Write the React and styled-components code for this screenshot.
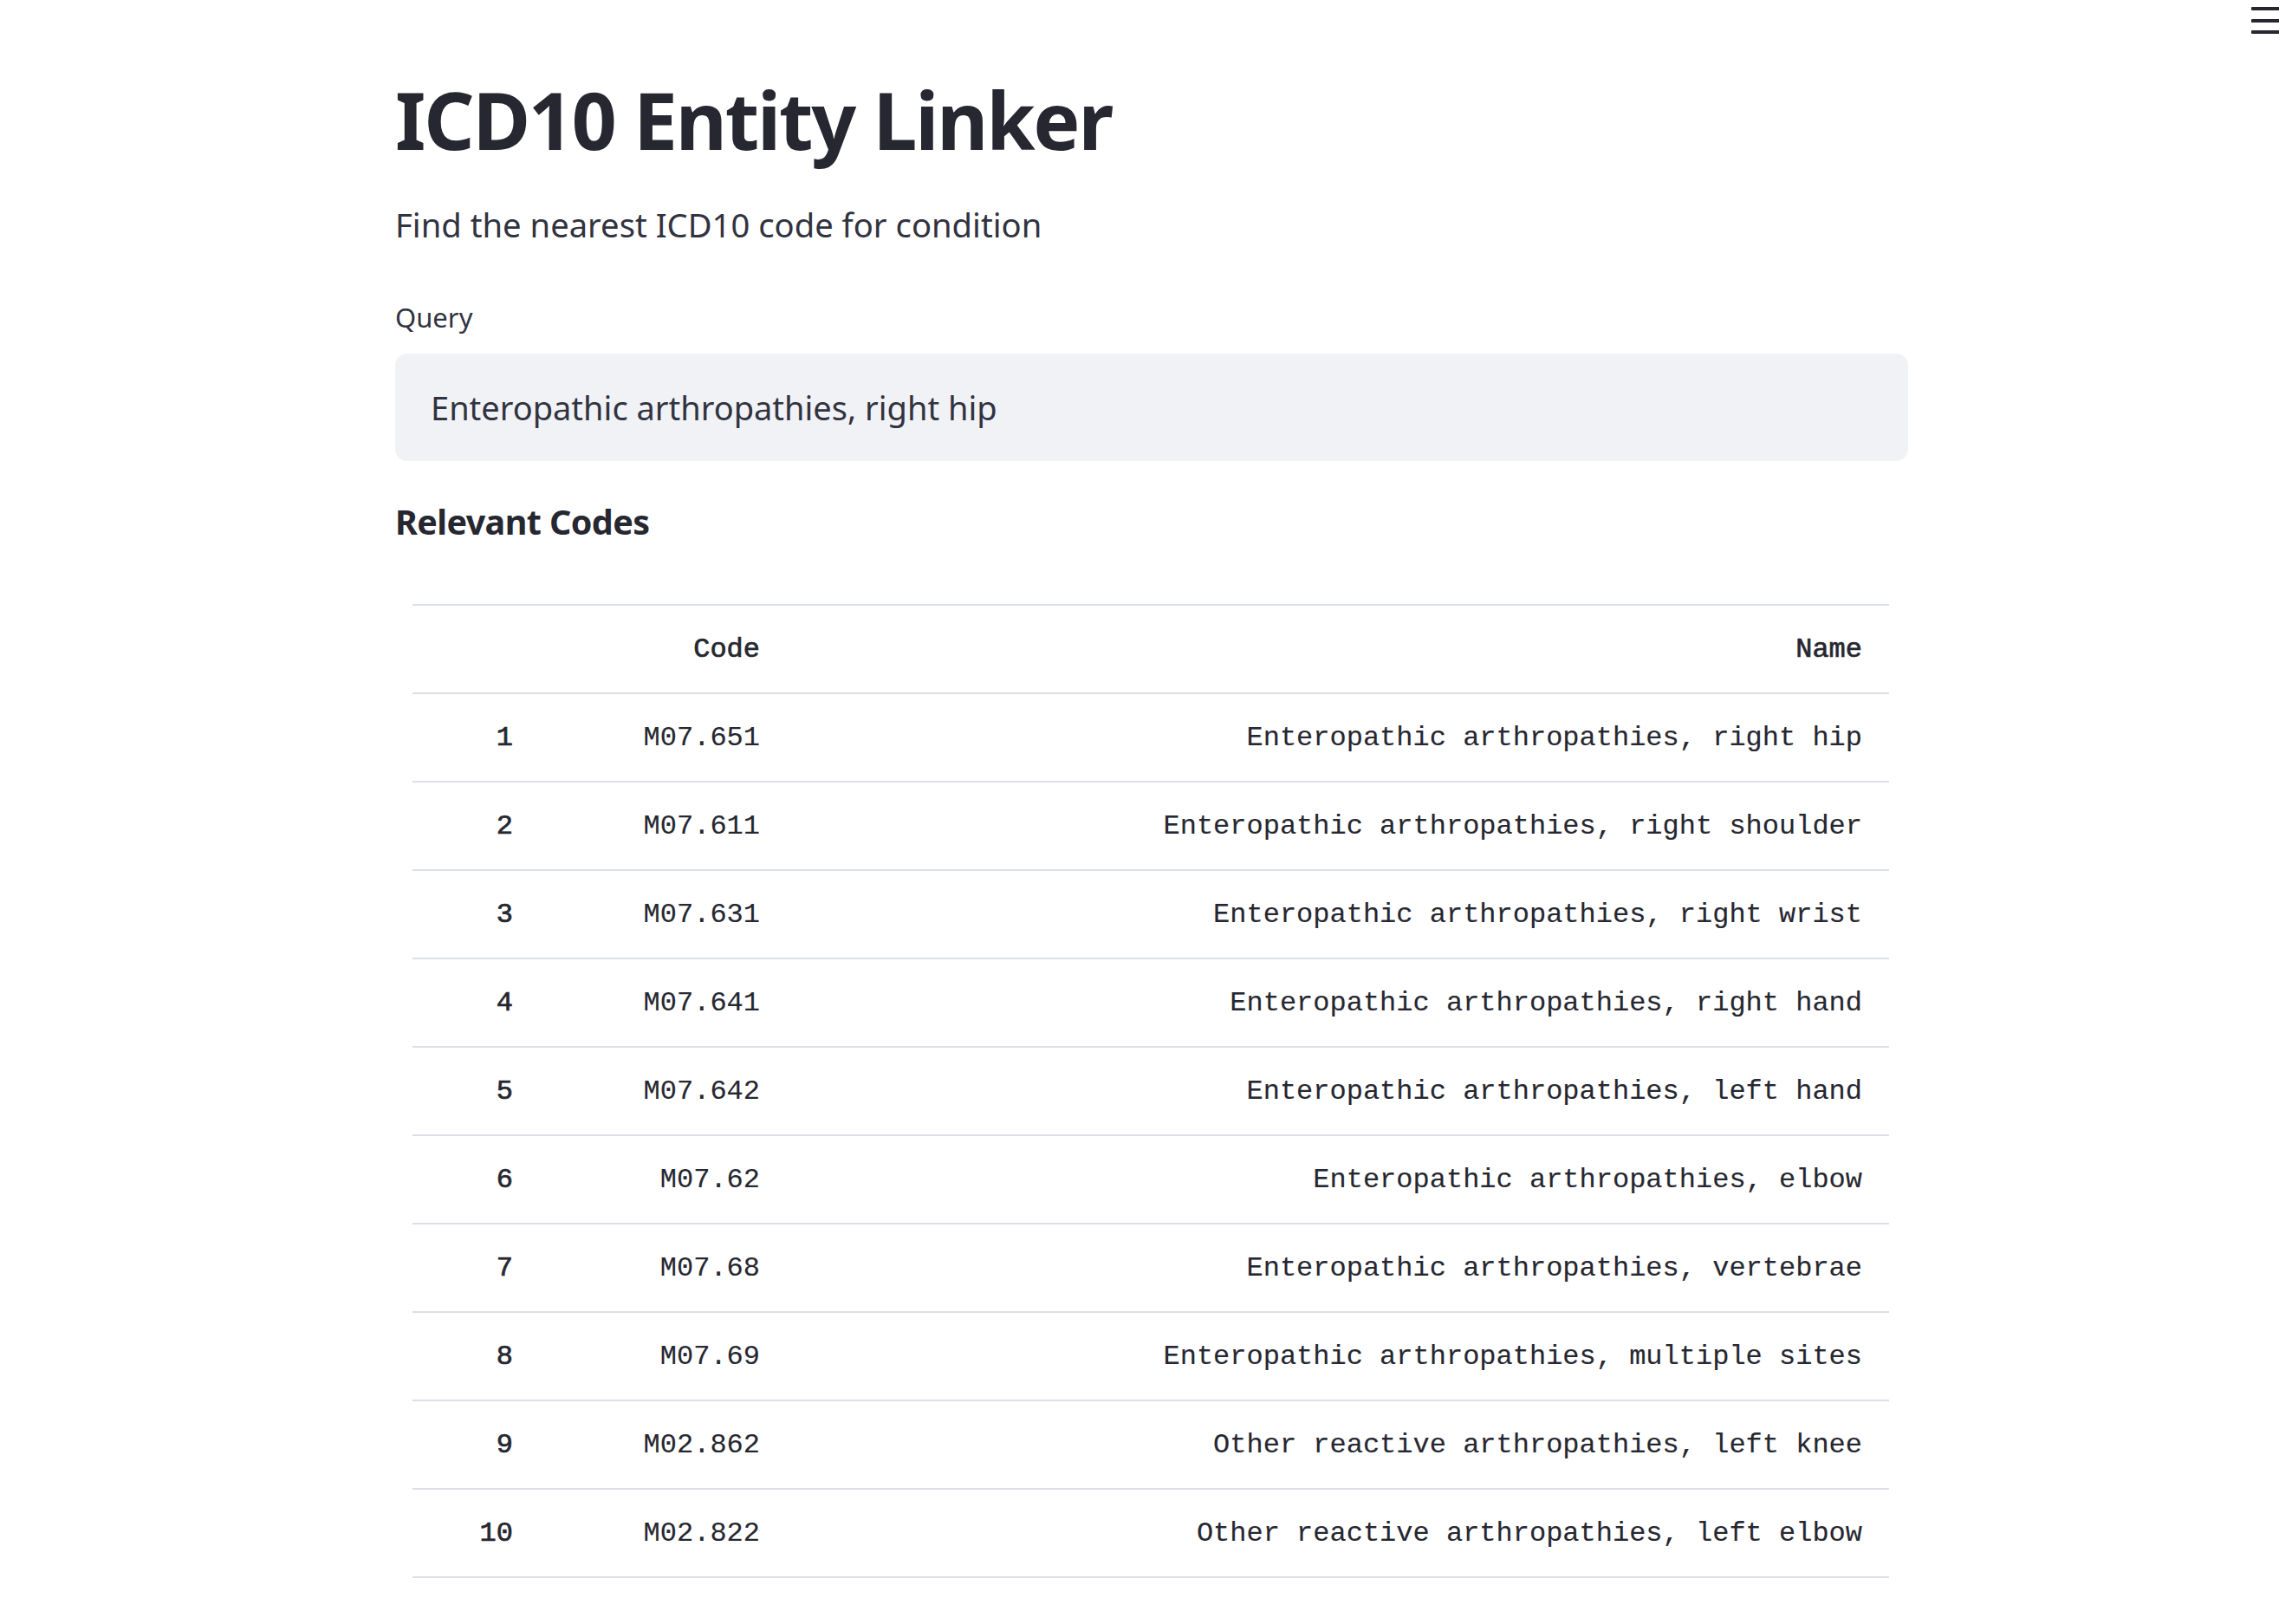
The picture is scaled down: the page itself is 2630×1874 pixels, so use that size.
import React from 'react';
import styled, { createGlobalStyle } from 'styled-components';

const GlobalStyle = createGlobalStyle`
    html, body {
        margin: 0;
        padding: 0;
        background: #ffffff;
        color: #31333f;
        font-family: "Noto Sans", "Open Sans", sans-serif;
    }
`

const rows = [
    { code: 'M07.651', name: 'Enteropathic arthropathies, right hip' },
    { code: 'M07.611', name: 'Enteropathic arthropathies, right shoulder' },
    { code: 'M07.631', name: 'Enteropathic arthropathies, right wrist' },
    { code: 'M07.641', name: 'Enteropathic arthropathies, right hand' },
    { code: 'M07.642', name: 'Enteropathic arthropathies, left hand' },
    { code: 'M07.62', name: 'Enteropathic arthropathies, elbow' },
    { code: 'M07.68', name: 'Enteropathic arthropathies, vertebrae' },
    { code: 'M07.69', name: 'Enteropathic arthropathies, multiple sites' },
    { code: 'M02.862', name: 'Other reactive arthropathies, left knee' },
    { code: 'M02.822', name: 'Other reactive arthropathies, left elbow' },
]

const MenuButton = styled.button`
    position: fixed;
    top: 8px;
    right: -8px;
    width: 40px;
    padding: 0;
    border: none;
    background: transparent;
    display: flex;
    flex-direction: column;
    gap: 9.5px;
    span {
        display: block;
        height: 4px;
        background: #262730;
        border-radius: 1px;
    }
`

const Main = styled.main`
    display: flex;
    justify-content: center;
    padding: 83px 0 56px 28px;
`

const Block = styled.div`
    width: 1746px;
    display: flex;
    flex-direction: column;
`

const Title = styled.h1`
    margin: 0;
    font-size: 91px;
    line-height: 110px;
    font-weight: 700;
    color: #262730;
    letter-spacing: -2.2px;
`

const Subtitle = styled.p`
    margin: 38px 0 0;
    font-size: 38.2px;
    line-height: 56px;
`

const Label = styled.label`
    margin-top: 57px;
    font-size: 31px;
    line-height: 44px;
`

const QueryInput = styled.input`
    margin-top: 20px;
    box-sizing: border-box;
    width: 100%;
    height: 124px;
    padding: 0 41px;
    border: none;
    border-radius: 14px;
    background: #f0f2f6;
    color: #31333f;
    font-family: "Noto Sans", "Open Sans", sans-serif;
    font-size: 38px;
    outline: none;
`

const Heading = styled.h3`
    margin: 42px 0 0;
    font-size: 39.5px;
    line-height: 56px;
    font-weight: 700;
    color: #262730;
    letter-spacing: -0.6px;
`

const Table = styled.table`
    margin: 67px 22px 0 20px;
    border-collapse: collapse;
    table-layout: fixed;
    font-family: "Liberation Mono", "DejaVu Sans Mono", monospace;
    font-size: 32px;
    color: #262730;
    border-top: 2px solid #dcdfe7;
`

const Cell = styled.td`
    height: 100px;
    padding: 0 31px 0 0;
    text-align: right;
    vertical-align: middle;
    border-bottom: 2px solid #dcdfe7;
    white-space: nowrap;
    font-weight: 400;
    -webkit-text-stroke: ${p => (p.head ? '0.7px #262730' : '0.15px #31333f')};
`

const HeadCell = styled(Cell).attrs({ as: 'th' })``

const App = () => {
    return (
        <>
            <GlobalStyle />
            <MenuButton aria-label="menu">
                <span />
                <span />
                <span />
            </MenuButton>
            <Main>
                <Block>
                    <Title>ICD10 Entity Linker</Title>
                    <Subtitle>Find the nearest ICD10 code for condition</Subtitle>
                    <Label htmlFor="query">Query</Label>
                    <QueryInput id="query" readOnly value="Enteropathic arthropathies, right hip" />
                    <Heading>Relevant Codes</Heading>
                    <Table>
                        <colgroup>
                            <col style={{ width: 147 }} />
                            <col style={{ width: 285 }} />
                            <col />
                        </colgroup>
                        <thead>
                            <tr>
                                <HeadCell head />
                                <HeadCell head>Code</HeadCell>
                                <HeadCell head>Name</HeadCell>
                            </tr>
                        </thead>
                        <tbody>
                            {rows.map((r, i) => (
                                <tr key={r.code}>
                                    <HeadCell head>{i + 1}</HeadCell>
                                    <Cell>{r.code}</Cell>
                                    <Cell>{r.name}</Cell>
                                </tr>
                            ))}
                        </tbody>
                    </Table>
                </Block>
            </Main>
        </>
    )
}

export default App;
